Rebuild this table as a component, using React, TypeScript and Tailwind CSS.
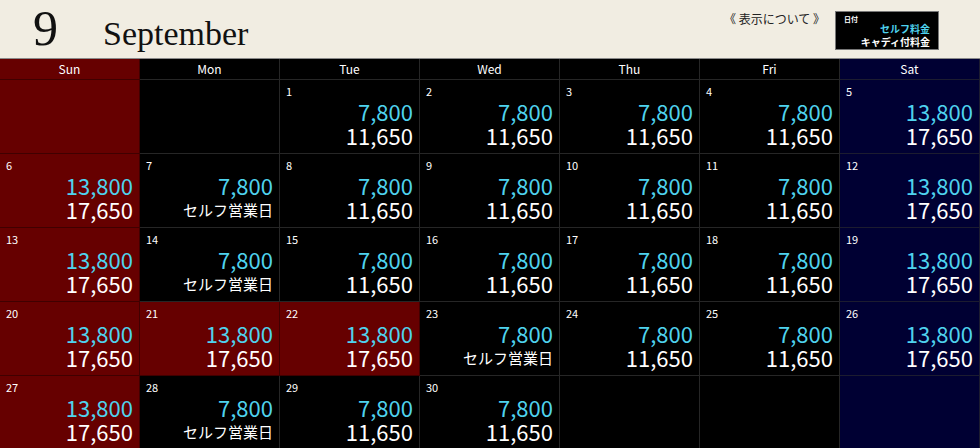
type Kind = "empty" | "normal" | "self" | "weekend";
type Tone = "sun" | "sat" | "day";

type Cell = { day?: number; kind: Kind; tone: Tone };

const WEEKDAYS = ["Sun", "Mon", "Tue", "Wed", "Thu", "Fri", "Sat"];

const rows: Cell[][] = [
  [
    { kind: "empty", tone: "sun" },
    { kind: "empty", tone: "day" },
    { day: 1, kind: "normal", tone: "day" },
    { day: 2, kind: "normal", tone: "day" },
    { day: 3, kind: "normal", tone: "day" },
    { day: 4, kind: "normal", tone: "day" },
    { day: 5, kind: "weekend", tone: "sat" },
  ],
  [
    { day: 6, kind: "weekend", tone: "sun" },
    { day: 7, kind: "self", tone: "day" },
    { day: 8, kind: "normal", tone: "day" },
    { day: 9, kind: "normal", tone: "day" },
    { day: 10, kind: "normal", tone: "day" },
    { day: 11, kind: "normal", tone: "day" },
    { day: 12, kind: "weekend", tone: "sat" },
  ],
  [
    { day: 13, kind: "weekend", tone: "sun" },
    { day: 14, kind: "self", tone: "day" },
    { day: 15, kind: "normal", tone: "day" },
    { day: 16, kind: "normal", tone: "day" },
    { day: 17, kind: "normal", tone: "day" },
    { day: 18, kind: "normal", tone: "day" },
    { day: 19, kind: "weekend", tone: "sat" },
  ],
  [
    { day: 20, kind: "weekend", tone: "sun" },
    { day: 21, kind: "weekend", tone: "sun" },
    { day: 22, kind: "weekend", tone: "sun" },
    { day: 23, kind: "self", tone: "day" },
    { day: 24, kind: "normal", tone: "day" },
    { day: 25, kind: "normal", tone: "day" },
    { day: 26, kind: "weekend", tone: "sat" },
  ],
  [
    { day: 27, kind: "weekend", tone: "sun" },
    { day: 28, kind: "self", tone: "day" },
    { day: 29, kind: "normal", tone: "day" },
    { day: 30, kind: "normal", tone: "day" },
    { kind: "empty", tone: "day" },
    { kind: "empty", tone: "day" },
    { kind: "empty", tone: "sat" },
  ],
];

const toneClass: Record<Tone, string> = {
  sun: "bg-[#660000] border-[#400000]",
  sat: "bg-[#000033] border-[#1c1c30]",
  day: "bg-black border-[#262626]",
};

function DayCell({ cell }: { cell: Cell }) {
  return (
    <div className={`h-[74px] border-r border-b px-[6px] pt-[4px] flex flex-col ${toneClass[cell.tone]}`}>
      {cell.day && (
        <>
          <span className="text-[11px] leading-[14px] text-white">{cell.day}</span>
          <span className="mt-[1px] text-right text-[22px] leading-[24px] text-[#4fd3ee]">
            {cell.kind === "weekend" ? "13,800" : "7,800"}
          </span>
          {cell.kind === "self" ? (
            <span className="text-right text-[15px] leading-[25px] text-white">セルフ営業日</span>
          ) : (
            <span className="text-right text-[22px] leading-[25px] text-white">
              {cell.kind === "weekend" ? "17,650" : "11,650"}
            </span>
          )}
        </>
      )}
    </div>
  );
}

export default function App() {
  return (
    <div className="w-[980px] h-[448px] overflow-hidden bg-black" style={{ fontFamily: '"Noto Sans CJK JP", "Noto Sans", sans-serif' }}>
      <header className="h-[59px] bg-[#f1ede2] flex justify-between border-b border-[#8a8a8a]">
        <div className="flex items-baseline pl-[33px] pt-[3px] text-[#111]" style={{ fontFamily: '"Liberation Serif", serif' }}>
          <span className="text-[50px] leading-none">9</span>
          <span className="ml-[45px] text-[34px] leading-none">September</span>
        </div>
        <div className="flex items-start pt-[11px] pr-[41px] gap-[10px]">
          <span className="text-[12px] leading-none pt-[2px] text-[#222]">《 表示について 》</span>
          <div className="w-[104px] h-[39px] bg-black border border-[#777] flex flex-col px-[8px] pt-[3px] font-bold">
            <span className="text-[7px] leading-[8px] text-white">日付</span>
            <span className="text-right text-[10px] leading-[13px] text-[#4fd3ee] -mt-[1px]">セルフ料金</span>
            <span className="text-right text-[10px] leading-[13px] text-white">キャディ付料金</span>
          </div>
        </div>
      </header>
      <div className="grid grid-cols-7">
        {WEEKDAYS.map((d, i) => (
          <div
            key={d}
            className={`h-[21px] border-r border-b text-center text-[12px] leading-[20px] text-white ${
              i === 0 ? toneClass.sun : i === 6 ? toneClass.sat : toneClass.day
            }`}
          >
            {d}
          </div>
        ))}
        {rows.flat().map((c, i) => (
          <DayCell key={i} cell={c} />
        ))}
      </div>
    </div>
  );
}
